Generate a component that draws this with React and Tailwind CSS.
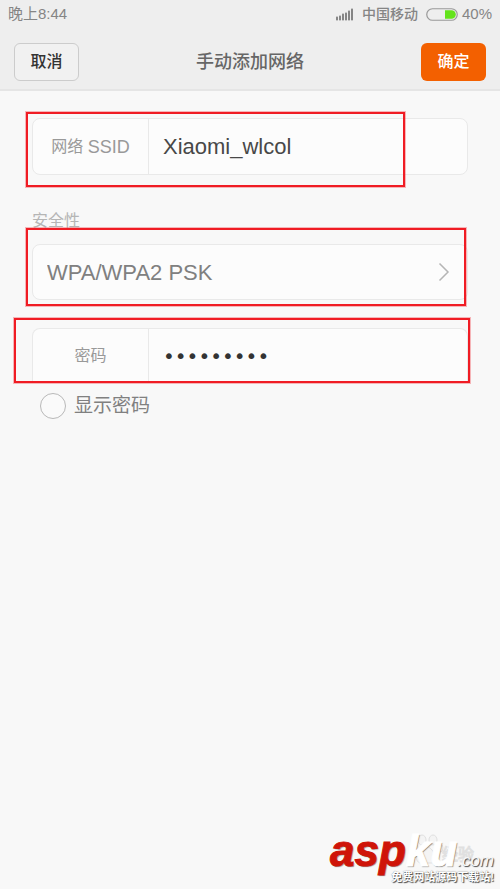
import { useState } from 'react'

const signalBars = [4, 5, 7, 8, 10, 12]

function SignalIcon() {
  return (
    <svg width="18" height="13" viewBox="0 0 18 13" fill="#858585" aria-hidden="true">
      {signalBars.map((height, i) => (
        <rect key={height} x={i * 3} y={12.5 - height} width="2" height={height} rx="0.700" />
      ))}
    </svg>
  )
}

function BatteryIcon() {
  return (
    <svg width="32" height="13" viewBox="0 0 32 13" aria-hidden="true">
      <path d="M19 2.200h6.500a4.300 4.300 0 0 1 0 8.600h-6.500z" fill="#64e31c" />
      <rect x="0.750" y="0.750" width="30.500" height="11.500" rx="5.750" fill="none" stroke="#999" strokeWidth="1.200" />
    </svg>
  )
}

function Highlight({ className }) {
  return (
    <div
      aria-hidden="true"
      className={`pointer-events-none absolute border-2 border-[#f01c24] ring-1 ring-[#f01c24]/30 ${className}`}
    />
  )
}

function StatusBar() {
  return (
    <div className="flex h-7 items-center justify-between px-2 text-[15px] text-[#858585]">
      <span>晚上8:44</span>
      <div className="flex items-center">
        <SignalIcon />
        <span className="ml-2 text-sm font-medium">中国移动</span>
        <span className="ml-2">
          <BatteryIcon />
        </span>
        <span className="ml-1">40%</span>
      </div>
    </div>
  )
}

function Watermark() {
  return (
    <div className="absolute right-1.5 bottom-0 flex flex-col items-end">
      <svg className="absolute right-4 bottom-5" width="90" height="36" viewBox="0 0 90 36" fill="#f4f4f4" stroke="#e0e0e0" aria-hidden="true">
        <ellipse cx="34" cy="7" rx="4" ry="5" />
        <ellipse cx="45" cy="7" rx="4" ry="5" />
        <ellipse cx="27" cy="15" rx="3" ry="4" />
        <ellipse cx="52" cy="15" rx="3" ry="4" />
        <path d="M39 14c4 0 6 5 9 8s1 8-3 8H33c-4 0-6-5-3-8s5-8 9-8z" />
        <text x="54" y="27" fontSize="16" fontWeight="400" fontFamily="Noto Sans CJK SC, sans-serif">经验</text>
      </svg>
      <div className="relative flex items-baseline leading-8 italic">
        <span className="text-[44px] font-bold text-[#cf1408] [-webkit-text-stroke:1px_#cf1408] [text-shadow:1px_1px_1px_#888]">asp</span>
        <span className="text-[44px] font-bold text-white [-webkit-text-stroke:1px_white] [text-shadow:1px_1px_1px_#777]">ku</span>
        <span className="text-[17px] text-[#f8f8f8] [text-shadow:1px_1px_1px_#444]">.com</span>
      </div>
      <span className="relative -mt-2.5 pb-0.5 text-[11px] leading-5 font-bold text-white [text-shadow:1px_1px_1px_#444,0_0_1px_#777]">
        免费网站源码下载站!
      </span>
    </div>
  )
}

export default function App() {
  const [ssid, setSsid] = useState('Xiaomi_wlcol')
  const [security, setSecurity] = useState('wpa')
  const [password, setPassword] = useState('123456789')
  const [showPassword, setShowPassword] = useState(false)

  return (
    <div className="relative flex min-h-screen flex-col bg-[#f8f8f8] font-['Liberation_Sans','Noto_Sans_CJK_SC',sans-serif]">
      <header className="border-b-2 border-[#e5e5e5] bg-[#eeeeee]">
        <StatusBar />
        <div className="flex h-[61px] items-center justify-between px-3.5 pt-1.5">
          <button
            type="button"
            className="h-[38px] w-[65px] rounded-md border border-[#cccccc] bg-[#f1f1f1] text-base font-medium text-[#333]"
          >
            取消
          </button>
          <h1 className="text-lg font-medium text-[#666]">手动添加网络</h1>
          <button type="submit" form="network" className="h-[38px] w-[65px] rounded-md bg-[#f36000] text-base font-medium text-white">
            确定
          </button>
        </div>
      </header>

      <form id="network" className="flex flex-col px-8 pt-[27px]" onSubmit={(e) => e.preventDefault()}>
        <div className="relative">
          <div className="flex h-[57px] rounded-lg border border-[#e9e9e9] bg-[#fcfcfc]">
            <label htmlFor="ssid" className="flex w-[116px] items-center justify-center border-r border-[#e9e9e9] text-[#999]">
              <span className="text-base">网络&nbsp;</span>
              <span className="text-lg">SSID</span>
            </label>
            <input
              id="ssid"
              value={ssid}
              onChange={(e) => setSsid(e.target.value)}
              className="min-w-0 flex-1 bg-transparent px-3.5 text-[22px] text-[#484848] outline-none"
            />
          </div>
          <Highlight className="-top-1.5 right-[63px] -bottom-3 -left-1.5" />
        </div>

        <label htmlFor="security" className="mt-8 text-base leading-7 text-[#b5b5b5]">
          安全性
        </label>
        <div className="relative mt-[9px]">
          <select
            id="security"
            value={security}
            onChange={(e) => setSecurity(e.target.value)}
            className="h-14 w-full appearance-none rounded-lg border border-[#e9e9e9] bg-[#fcfcfc] px-3.5 text-[22px] text-[#808080] outline-none"
          >
            <option value="wpa">WPA/WPA2 PSK</option>
          </select>
          <svg className="pointer-events-none absolute top-[18px] right-[18px]" width="12" height="20" viewBox="0 0 12 20" fill="none" stroke="#b5b5b5" strokeWidth="1.500" aria-hidden="true">
            <path d="M1.500 1.500l8.500 8.500-8.500 8.500" />
          </svg>
          <Highlight className="-top-4 right-0.5 -bottom-1.5 -left-1.5" />
        </div>

        <div className="relative mt-7">
          <div className="flex h-[55px] rounded-t-lg border border-b-0 border-[#e9e9e9] bg-[#fcfcfc]">
            <label htmlFor="password" className="flex w-[116px] items-center justify-center border-r border-[#e9e9e9] text-base text-[#999]">
              密码
            </label>
            <input
              id="password"
              type={showPassword ? 'text' : 'password'}
              autoComplete="off"
              value={password}
              onChange={(e) => setPassword(e.target.value)}
              className="min-w-0 flex-1 bg-transparent px-3.5 font-['DejaVu_Sans',sans-serif] text-xl text-[#333] outline-none"
            />
          </div>
          <Highlight className="-top-2.5 -right-0.5 bottom-0 -left-[18px]" />
        </div>

        <label className="mt-[9px] flex items-center gap-2 self-start pl-2 text-[19px] text-[#808080]">
          <input
            type="checkbox"
            checked={showPassword}
            onChange={(e) => setShowPassword(e.target.checked)}
            className="h-[26px] w-[26px] appearance-none rounded-full border border-[#b8b8b8] bg-[#fafafa] checked:bg-[#f36000]"
          />
          显示密码
        </label>
      </form>

      <Watermark />
    </div>
  )
}
